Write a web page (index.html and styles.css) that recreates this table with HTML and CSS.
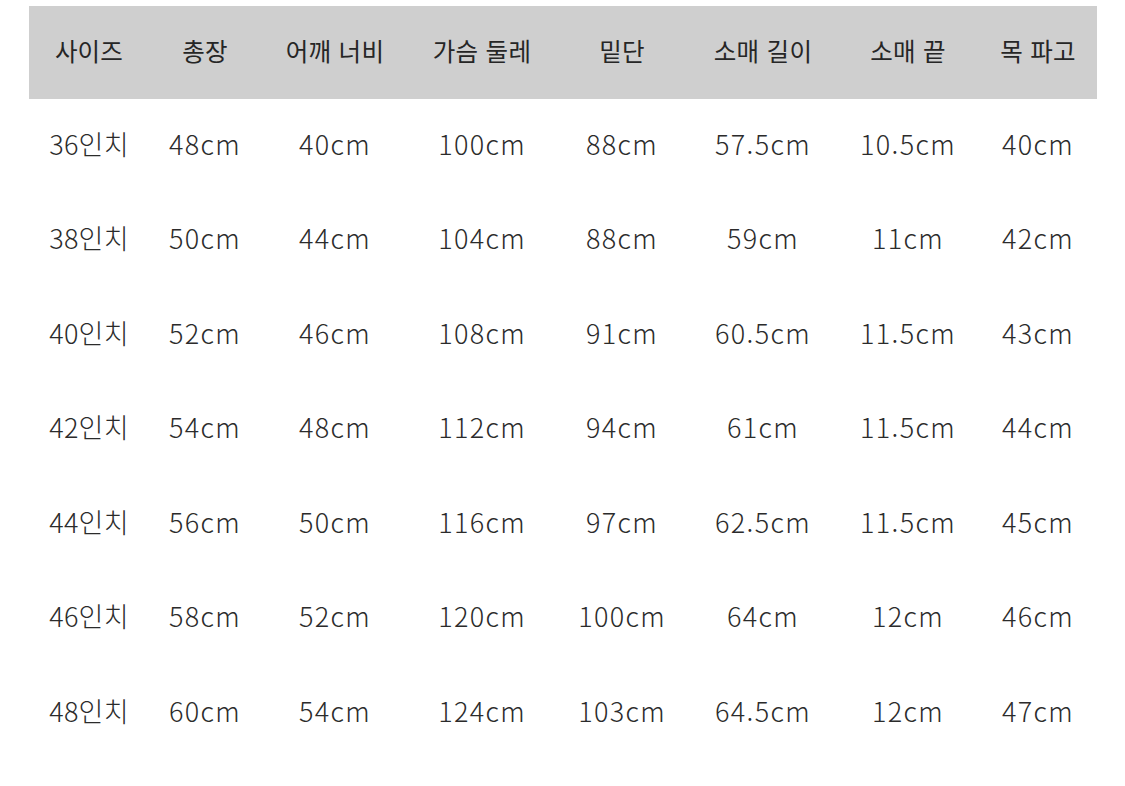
FILE: index.html
```html
<!DOCTYPE html>
<html lang="ko">
<head>
<meta charset="utf-8">
<title>사이즈표</title>
<link rel="stylesheet" href="styles.css">
</head>
<body>
<div class="table">
  <div class="row head">
    <div>사이즈</div><div>총장</div><div>어깨 너비</div><div>가슴 둘레</div><div>밑단</div><div>소매 길이</div><div>소매 끝</div><div>목 파고</div>
  </div>
  <div class="row"><div>36인치</div><div>48cm</div><div>40cm</div><div>100cm</div><div>88cm</div><div>57.5cm</div><div>10.5cm</div><div>40cm</div></div>
  <div class="row"><div>38인치</div><div>50cm</div><div>44cm</div><div>104cm</div><div>88cm</div><div>59cm</div><div>11cm</div><div>42cm</div></div>
  <div class="row"><div>40인치</div><div>52cm</div><div>46cm</div><div>108cm</div><div>91cm</div><div>60.5cm</div><div>11.5cm</div><div>43cm</div></div>
  <div class="row"><div>42인치</div><div>54cm</div><div>48cm</div><div>112cm</div><div>94cm</div><div>61cm</div><div>11.5cm</div><div>44cm</div></div>
  <div class="row"><div>44인치</div><div>56cm</div><div>50cm</div><div>116cm</div><div>97cm</div><div>62.5cm</div><div>11.5cm</div><div>45cm</div></div>
  <div class="row"><div>46인치</div><div>58cm</div><div>52cm</div><div>120cm</div><div>100cm</div><div>64cm</div><div>12cm</div><div>46cm</div></div>
  <div class="row"><div>48인치</div><div>60cm</div><div>54cm</div><div>124cm</div><div>103cm</div><div>64.5cm</div><div>12cm</div><div>47cm</div></div>
</div>
</body>
</html>
```
FILE: styles.css
```css
html, body {
  margin: 0;
  background: #ffffff;
}
body {
  padding: 6px 28px 0 29px;
  font-family: "Noto Sans CJK KR", "Noto Sans", sans-serif;
  color: #2b2b2b;
}
.table {
  display: flex;
  flex-direction: column;
}
.row {
  display: grid;
  grid-template-columns: 120px 112px 148px 146px 134px 148px 142px 118px;
  height: 94.5px;
  box-sizing: border-box;
  padding-bottom: 6px;
  align-items: center;
  font-size: 27px;
  font-weight: 300;
  letter-spacing: 1.3px;
}
.row > div {
  text-align: center;
  white-space: nowrap;
}
.row > div:first-child {
  letter-spacing: 0.2px;
}
.row.head {
  height: 93px;
  padding-bottom: 4px;
  background: #cfcfcf;
  font-size: 24.5px;
  font-weight: 400;
  letter-spacing: 0.3px;
  color: #262626;
}
```
